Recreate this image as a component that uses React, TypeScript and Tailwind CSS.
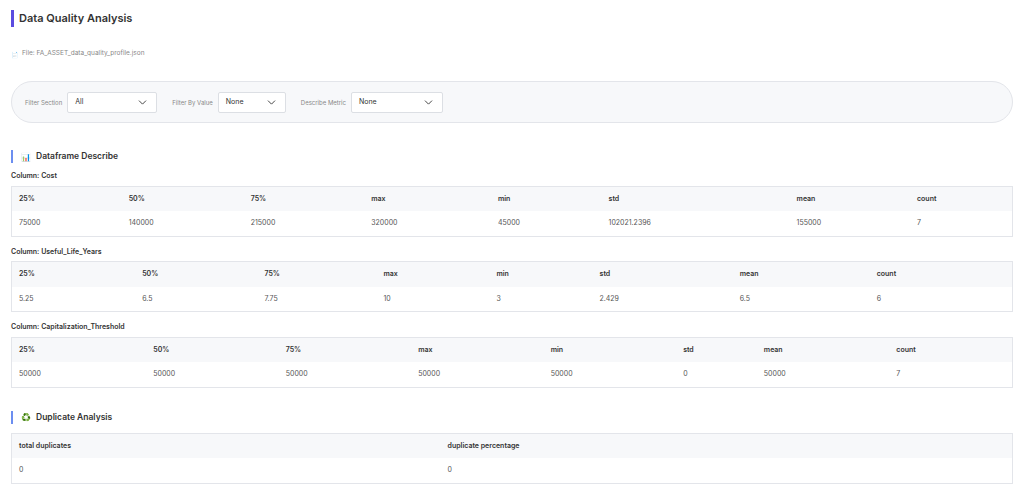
import { ChevronDown } from "lucide-react";

const font = { fontFamily: "Inter, 'Noto Sans', sans-serif" };

const describe = [
  { name: "Cost", vals: ["75000", "140000", "215000", "320000", "45000", "102021.2396", "155000", "7"] },
  { name: "Useful_Life_Years", vals: ["5.25", "6.5", "7.75", "10", "3", "2.429", "6.5", "6"] },
  { name: "Capitalization_Threshold", vals: ["50000", "50000", "50000", "50000", "50000", "0", "50000", "7"] },
];
const heads = ["25%", "50%", "75%", "max", "min", "std", "mean", "count"];

function Table({ cols, vals }: { cols: string[]; vals: string[] }) {
  return (
    <table className="w-full border border-[#e3e5ea] text-[7px] text-[#333]">
      <thead>
        <tr className="bg-[#f7f8fa] h-[25px]">
          {cols.map((c) => (
            <th key={c} className="text-left font-semibold pl-[7px]">{c}</th>
          ))}
        </tr>
      </thead>
      <tbody>
        <tr className="h-[25px]">
          {vals.map((v, i) => (
            <td key={i} className="pl-[7px] text-[#555]">{v}</td>
          ))}
        </tr>
      </tbody>
    </table>
  );
}

function Heading({ icon, text }: { icon: string; text: string }) {
  return (
    <div className="flex items-center gap-[5px] border-l-2 border-[#6c8ef0] pl-[8px] h-[13px] text-[8.5px] font-semibold text-[#333]">
      <span className="text-[8px]">{icon}</span>
      {text}
    </div>
  );
}

function Select({ label, value, w }: { label: string; value: string; w: string }) {
  return (
    <div className="flex items-center gap-[5px]">
      <span className="text-[6px] text-[#888]">{label}</span>
      <div className={`${w} h-[21px] bg-white border border-[#dcdfe4] rounded-[2px] flex items-center justify-between px-[7px] text-[7px] text-[#333]`}>
        {value}
        <ChevronDown size={13} strokeWidth={1.8} className="text-[#444]" />
      </div>
    </div>
  );
}

export default function App() {
  return (
    <div style={font} className="w-[1024px] h-[493px] bg-white px-[11px] pt-[10px]">
      <div className="border-l-[3px] border-[#5b4ce0] pl-[5px] h-[17px] flex items-center text-[11px] font-semibold text-[#333]">
        Data Quality Analysis
      </div>
      <div className="mt-[22px] flex items-center gap-[4px] text-[6.5px] text-[#888] h-[10px]">
        <span className="text-[6px]">📄</span>
        File: FA_ASSET_data_quality_profile.json
      </div>
      <div className="mt-[22px] h-[42px] rounded-full border border-[#e3e5ea] bg-[#f7f8fa] flex items-center gap-[15px] pl-[13px]">
        <Select label="Filter Section" value="All" w="w-[90px]" />
        <Select label="Filter By Value" value="None" w="w-[68px]" />
        <Select label="Describe Metric" value="None" w="w-[92px]" />
      </div>
      <div className="mt-[27px]">
        <Heading icon="📊" text="Dataframe Describe" />
      </div>
      {describe.map((d, i) => (
        <div key={d.name} className={i === 0 ? "mt-[8px]" : "mt-[10px]"}>
          <div className="text-[7px] font-semibold text-[#333] mb-[4px]">Column: {d.name}</div>
          <Table cols={heads} vals={d.vals} />
        </div>
      ))}
      <div className="mt-[23px]">
        <Heading icon="♻️" text="Duplicate Analysis" />
      </div>
      <div className="mt-[9px]">
        <Table cols={["total duplicates", "duplicate percentage"]} vals={["0", "0"]} />
      </div>
    </div>
  );
}
